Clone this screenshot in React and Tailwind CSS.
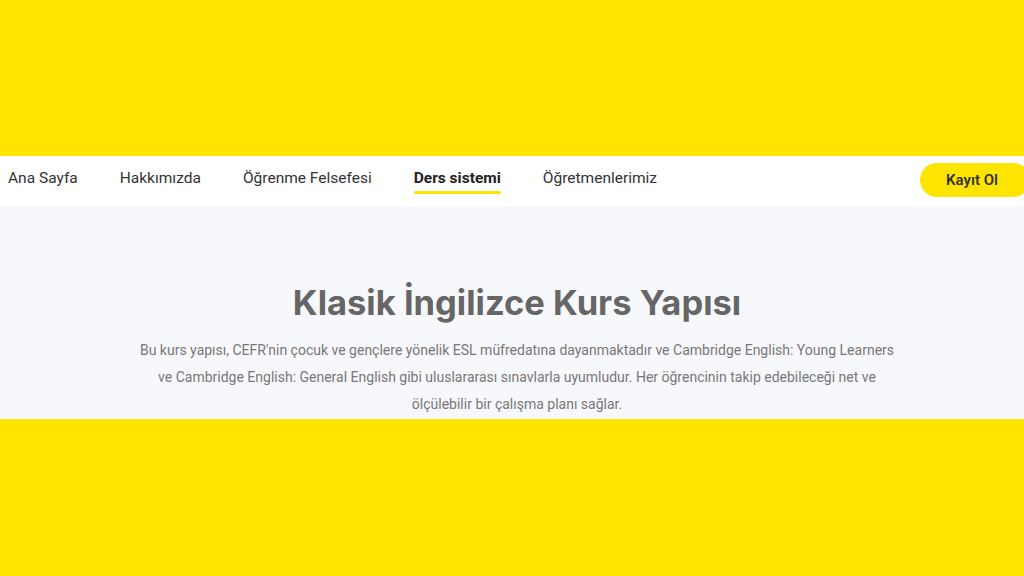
import React from "react";

const links = ["Ana Sayfa", "Hakkımızda", "Öğrenme Felsefesi", "Ders sistemi", "Öğretmenlerimiz"];

const App = () => {
  return (
    <div className="w-[1024px] h-[576px] overflow-hidden bg-[#fde500] flex flex-col font-['Roboto','Liberation_Sans',sans-serif]">
      <div className="h-[156px] shrink-0" />
      <nav className="h-[50px] shrink-0 bg-white flex items-start justify-between pl-2">
        <ul className="flex items-center gap-[42px] pt-[11px] text-[15.5px] leading-[22px] text-[#333]">
          {links.map((l) => (
            <li key={l} className="relative">
              <span className={l === "Ders sistemi" ? "font-bold text-[#222]" : ""}>{l}</span>
              {l === "Ders sistemi" && (
                <span className="absolute left-0 right-0 top-[24px] h-[3px] rounded-full bg-[#fde500]" />
              )}
            </li>
          ))}
        </ul>
        <button className="mt-[7px] h-[34px] w-[110px] -mr-[6px] pr-[6px] rounded-full bg-[#fde500] text-[15px] font-semibold text-[#333]">
          Kayıt Ol
        </button>
      </nav>
      <section className="h-[213px] shrink-0 bg-[#f7f8fb] flex flex-col items-center pt-[77px] pl-[10px]">
        <h1 className="font-['Inter','Liberation_Sans',sans-serif] text-[34.5px] leading-[40px] font-bold text-[#666]">
          Klasik İngilizce Kurs Yapısı
        </h1>
        <p className="mt-[14px] max-w-[770px] text-center text-[14px] leading-[27px] text-[#777]">
          Bu kurs yapısı, CEFR'nin çocuk ve gençlere yönelik ESL müfredatına dayanmaktadır ve Cambridge English: Young Learners
          ve Cambridge English: General English gibi uluslararası sınavlarla uyumludur. Her öğrencinin takip edebileceği net ve
          ölçülebilir bir çalışma planı sağlar.
        </p>
      </section>
    </div>
  );
};

export default App;
